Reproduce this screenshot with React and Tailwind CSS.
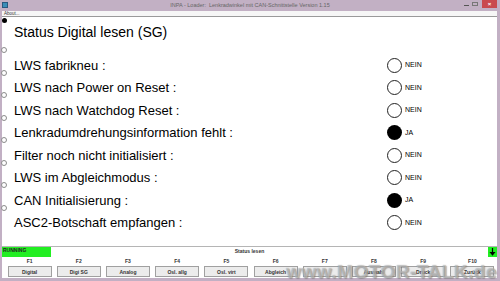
import React from "react";

const rows = [
  ["LWS fabrikneu :", false],
  ["LWS nach Power on Reset :", false],
  ["LWS nach Watchdog Reset :", false],
  ["Lenkradumdrehungsinformation fehlt :", true],
  ["Filter noch nicht initialisiert :", false],
  ["LWS im Abgleichmodus :", false],
  ["CAN Initialisierung :", true],
  ["ASC2-Botschaft empfangen :", false],
];

const keys = [
  ["F1", "Digital"],
  ["F2", "Digi SG"],
  ["F3", "Analog"],
  ["F4", "Osl. allg"],
  ["F5", "Osl. virt"],
  ["F6", "Abgleich"],
  ["F7", ""],
  ["F8", "Auswahl"],
  ["F9", "Druck"],
  ["F10", "Zurück"],
];

export default function App() {
  return (
    <div
      className="w-[500px] h-[281px] bg-[#c2b0c4] flex flex-col overflow-hidden relative"
      style={{ fontFamily: '"Liberation Sans", Arial, sans-serif' }}
    >
      {/* title bar */}
      <div className="h-[11px] flex items-start relative">
        <div className="ml-[2px] mt-[2px] w-[6px] h-[6px] bg-[#3b8fb8] border border-[#2a5a80]" />
        <div className="absolute left-0 right-0 top-[1px] text-center text-[5.5px] leading-[8px] text-[#666]">
          INPA - Loader:&nbsp; Lenkradwinkel mit CAN-Schnittstelle Version 1.15
        </div>
        <div className="ml-auto flex items-start">
          <div className="w-[8px] h-[7px] flex items-end justify-center pb-[1.5px]">
            <div className="w-[5px] h-[1px] bg-[#555]" />
          </div>
          <div className="w-[10px] h-[7px] flex items-center justify-center">
            <div className="w-[6px] h-[4px] border border-[#777]" />
          </div>
          <div className="ml-[2px] mr-[3px] w-[15px] h-[8px] bg-[#c94a4e] flex items-center justify-center text-white text-[6px] leading-[6px] font-bold">
            ×
          </div>
        </div>
      </div>

      {/* window client */}
      <div className="flex-1 flex flex-col ml-[2px] mr-[3px]">
        {/* menu bar */}
        <div className="h-[5px] bg-[#f6f6f6] flex items-center pl-[2px]">
          <span className="text-[4.5px] leading-[5px] text-[#333]">About...</span>
        </div>
        <div className="h-[1px] bg-[#9a9a9a]" />

        {/* content */}
        <div className="h-[229px] bg-white flex">
          {/* left dots */}
          <div className="w-[12px] flex flex-col items-start">
            <div className="mt-[0.5px] w-[5px] h-[5px] rounded-full bg-black" />
            <div className="mt-[24.5px] flex flex-col gap-[16.57px]">
              {rows.map((_, i) => (
                <div
                  key={i}
                  className="-ml-[1px] w-[6px] h-[6px] rounded-full border border-[#8a8a8a] bg-white"
                />
              ))}
            </div>
          </div>

          {/* main */}
          <div className="flex flex-col">
            <div className="h-[36.75px] pt-[6.5px] text-[14px] leading-[17px] text-black">
              Status Digital lesen (SG)
            </div>
            {rows.map(([label, on], i) => (
              <div key={i} className="h-[22.5px] flex items-center">
                <div className="w-[373px] text-[13px] leading-[15px] text-black">{label}</div>
                <div
                  className={
                    on
                      ? "w-[15px] h-[15px] rounded-full bg-black"
                      : "w-[15px] h-[15px] rounded-full border-[1.5px] border-[#222] bg-white"
                  }
                />
                <div className="ml-[3px] text-[7px] leading-[8px] text-black">
                  {on ? "JA" : "NEIN"}
                </div>
              </div>
            ))}
          </div>
        </div>

        {/* bottom */}
        <div className="flex-1 bg-white flex flex-col border-t border-[#b5b5b5]">
          <div className="h-[10px] flex items-start relative">
            <div className="w-[49px] h-[10px] bg-[#22ee22] text-[5px] leading-[7px] font-bold text-[#222] pl-[1px]">
              RUNNING
            </div>
            <div className="absolute left-0 right-0 top-[1px] text-center text-[5px] leading-[6px] font-bold text-[#333]">
              Status lesen
            </div>
            <div className="ml-auto w-[9px] h-[10px] bg-[#22ee22] flex items-center justify-center">
              <svg width="7" height="8" viewBox="0 0 7 8">
                <line x1="3.5" y1="0" x2="3.5" y2="6" stroke="black" strokeWidth="1.2" />
                <polygon points="0.5,4 6.5,4 3.5,7.8" fill="black" />
              </svg>
            </div>
          </div>
          <div className="grid grid-cols-10 pl-[3px]">
            {keys.map(([k, l]) => (
              <div key={k} className="flex flex-col items-center">
                <div className="h-[8px] mt-[1px] text-[5px] leading-[6px] font-bold text-[#333]">{k}</div>
                <div className="w-[44px] h-[11px] bg-[#ececec] border border-[#a0a0a0] flex items-center justify-center text-[5px] leading-[6px] font-bold text-[#333]">
                  {l}
                </div>
              </div>
            ))}
          </div>
        </div>
      </div>
      <div className="h-[3px]" />

      {/* watermark */}
      <div className="absolute right-[3px] bottom-[-2px] text-[19px] leading-[22px] font-bold text-white/40 tracking-[0.5px] [text-shadow:0_0_1px_rgba(90,90,90,0.6),1px_1px_1px_rgba(120,120,120,0.5)] pointer-events-none">
        www.MOTOR-TALK.de
      </div>
    </div>
  );
}
